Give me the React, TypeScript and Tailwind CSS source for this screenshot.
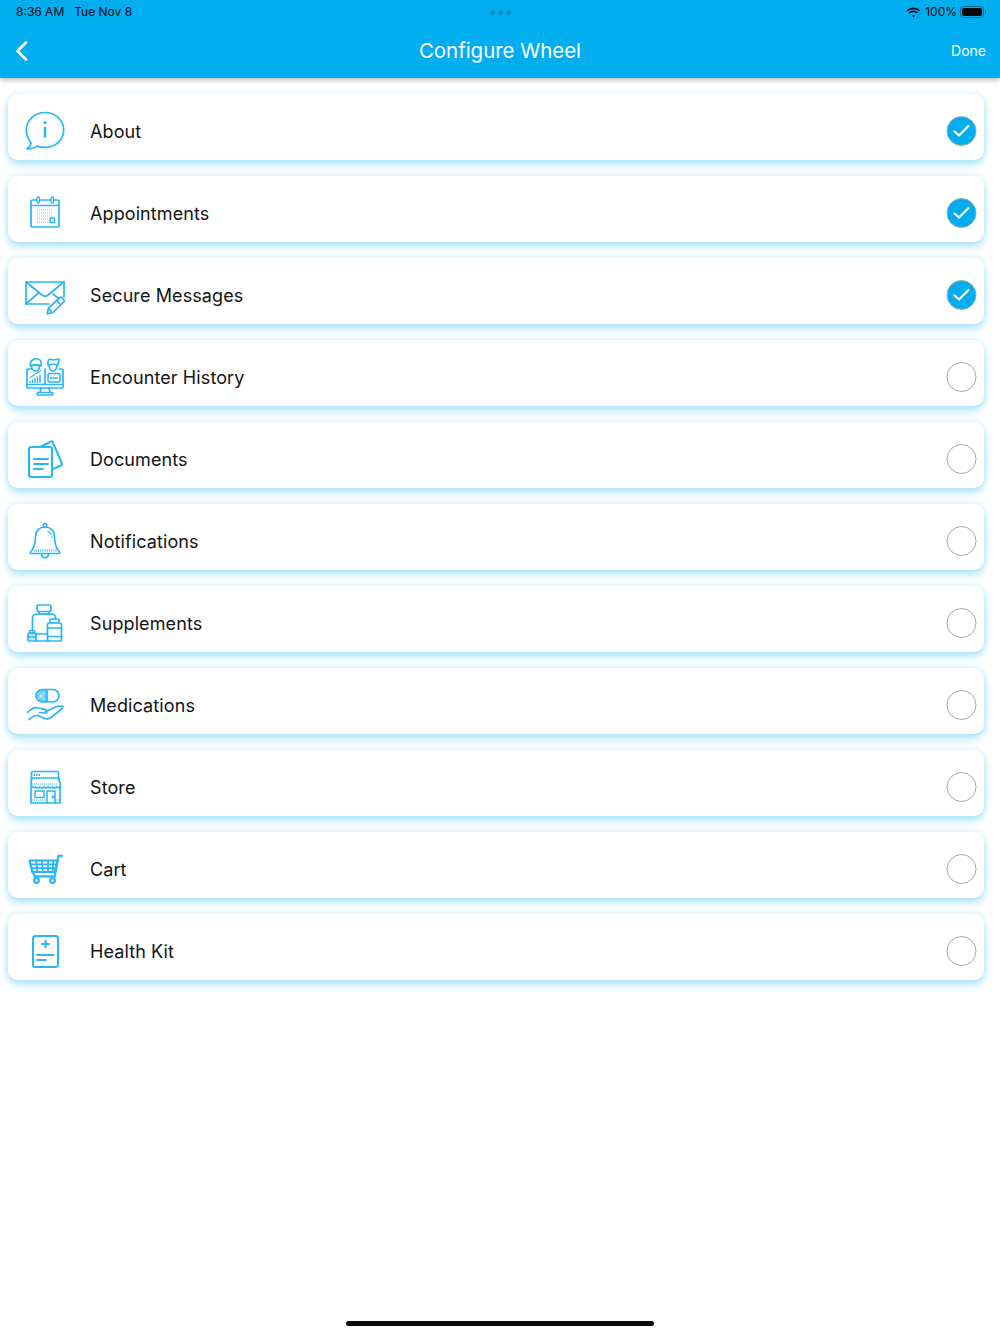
import type { ReactNode } from "react";

const Ico = ({ children }: { children: ReactNode }) => (
  <svg width="44" height="44" viewBox="0 0 44 44" fill="none" stroke="#29b6f6" strokeWidth="1.700" strokeLinecap="round" strokeLinejoin="round" className="shrink-0">
    {children}
  </svg>
);

const AboutIcon = () => (
  <Ico>
    <path d="M22 3.500c10.200 0 18.700 7.500 18.700 17.600S32.200 38.400 22 38.400c-2.800 0-5.300-.4-7.600-1.300-2.800 1.800-6.200 3.200-10.400 2.700 2.200-1.400 3.600-3.300 4-5.700C5.400 30.700 3.300 26.300 3.300 21.100 3.300 11 11.800 3.500 22 3.500Z" />
    <circle cx="22" cy="13.500" r="1.500" fill="#29b6f6" stroke="none" />
    <path d="M22 18v10.500" strokeWidth="2.600" strokeLinecap="butt" />
  </Ico>
);

const CalendarIcon = () => (
  <Ico>
    <rect x="8" y="9" width="28" height="27" rx="2" />
    <path d="M8 14.500h28" />
    <rect x="14" y="6" width="2.400" height="6" rx="1.200" fill="#fff" strokeWidth="1.300" />
    <rect x="28" y="6" width="2.400" height="6" rx="1.200" fill="#fff" strokeWidth="1.300" />
    <path d="M14 19h16M14 22h16M14 25h16M14 28h12M14 31h12" strokeWidth="1.200" strokeDasharray="1 1" strokeLinecap="butt" opacity=".7" />
    <rect x="27" y="27" width="4.500" height="4.500" strokeWidth="1.400" />
  </Ico>
);

const EnvelopeIcon = () => (
  <Ico>
    <path d="M26 31H3V9h38v15" />
    <path d="M3 9l16 13c2 1.500 4 1.500 6 0L41 9" />
    <path d="M3 31l13-11.500M30 21l5 4" />
    <path d="M38.500 24.500l2.500 2.500c.5.5.5 1.200 0 1.700L30 39.500l-5.800 1.300 1.300-5.800 11.500-10.500c.7-.6 1.500-.5 2 0Z" fill="#fff" />
    <path d="M34 28l3.500 3.500M26 36l2.500 2.500" />
  </Ico>
);

const EncounterIcon = () => (
  <Ico>
    <path d="M8 14H5a1 1 0 0 0-1 1v17a1 1 0 0 0 1 1h34a1 1 0 0 0 1-1V15a1 1 0 0 0-1-1h-3" />
    <path d="M4 29.500h36M22 14v15.500M18 33l-1 4.500h10l-1-4.500M14.500 40h15v-2.500h-15Z" />
    <path d="M7.500 11c-.5-2.500.5-5 2-6 2.500-1.700 6-1.700 7.500 0 1.300 1.500 1.500 4 1 6-2-1.500-8-1.500-10.500 0Z" strokeWidth="1.700" />
    <path d="M8.500 11c.3 3.500 2 5 4 5s3.800-1.500 4-5" />
    <path d="M25 10c-.5-2.500 0-4.500 1.500-6l3.500 1 6-1c0 2.500-.5 4.500-1.500 6-3-1-6-1-9.500 0Z" strokeWidth="1.700" />
    <path d="M26 10c.3 3.500 2 6 4 6s3.800-2.500 4-6" />
    <path d="M7 28v-2M9.500 28v-3.500M12 28v-5M14.500 28v-6.500M17 28v-8" strokeWidth="1.400" strokeLinecap="butt" />
    <path d="M7 22.500l11-7" strokeWidth="1.100" />
    <rect x="25" y="18.500" width="12" height="8.500" rx="1.200" strokeWidth="1.500" />
    <path d="M27.500 23h7" strokeWidth="1.700" />
  </Ico>
);

const DocumentsIcon = () => (
  <Ico>
    <path d="M17 10l11-5.500c.7-.3 1.400 0 1.700.6L39 26.500c.3.700 0 1.400-.6 1.700L29 32.500" strokeWidth="2.100" />
    <rect x="6" y="10" width="23" height="30" rx="2.500" fill="#fff" strokeWidth="2.100" />
    <path d="M11 22h14M11 27h14M11 32h9" strokeWidth="1.800" />
  </Ico>
);

const BellIcon = () => (
  <Ico>
    <path d="M22 8c-5.500 0-9.500 3.800-9.500 9.500 0 7-1.300 11.500-5 15.500-.5.700 0 1.500.8 1.500h27.400c.8 0 1.300-.8.800-1.500-3.700-4-5-8.500-5-15.500C31.500 11.800 27.500 8 22 8Z" />
    <circle cx="22" cy="6.500" r="1.800" fill="#fff" />
    <path d="M25 12.500c1.500.7 2.300 1.500 2.900 2.800M29 18v.5" strokeWidth="1.300" />
    <path d="M10.500 31.500h23" strokeWidth="2" strokeDasharray="1 1.200" strokeLinecap="butt" />
    <path d="M18.500 34.500c0 2.600 1.600 4.200 3.500 4.200s3.500-1.600 3.500-4.200" />
  </Ico>
);

const SupplementsIcon = () => (
  <Ico>
    <rect x="14" y="4" width="14" height="6.500" rx="1.500" />
    <path d="M16 10.500V13h10v-2.500" />
    <path d="M9.500 30V17c0-2.200 1.800-4 4-4h15c2.200 0 4 1.800 4 4v1" />
    <path d="M13 33h11.500M13 40h11.500" />
    <rect x="27" y="18" width="9" height="4" rx="1" />
    <rect x="24.500" y="22" width="14" height="18" rx="2" fill="#fff" />
    <path d="M24.500 27h14M24.500 35.500h14" />
    <rect x="6.500" y="29.500" width="5" height="2.500" rx=".6" strokeWidth="1.400" />
    <rect x="5" y="32" width="8" height="8" rx="1" fill="#29b6f6" fillOpacity=".3" />
    <path d="M5 36h8" strokeWidth="1.400" />
  </Ico>
);

const MedicationIcon = () => (
  <Ico>
    <path d="M19.500 6.500H24V19h-4.500a6.250 6.250 0 0 1 0-12.500Z" fill="#29b6f6" stroke="none" fillOpacity=".7" />
    <path d="M15 10l6 6M21 10l-6 6" stroke="#fff" strokeWidth="1.400" strokeDasharray="1.200 1.200" strokeLinecap="butt" />
    <rect x="13" y="6.500" width="23" height="12.500" rx="6.250" />
    <path d="M24 6.500V19" />
    <path d="M4.500 29.500c3.500-3.500 7-6 11-4.500l7 1.700c2.300.6 2 3.500-.3 3.300l-5.700-.5" />
    <path d="M22.500 28.500l11-4.800c3.300-1.600 6 .2 6.500-.5-.5 3-2.700 4.200-5 5.800l-7 5.500c-2.500 1.700-5 1.700-7.500.5l-5-2.200c-3-1.200-5.500.2-9.500 3.700" />
  </Ico>
);

const StoreIcon = () => (
  <Ico>
    <path d="M8.500 15V8A1.500 1.500 0 0 1 10 6.500h24A1.500 1.500 0 0 1 35.500 8v7" />
    <path d="M8 22.500V38h29V22.500" />
    <path d="M10.500 10h7" strokeWidth="1.800" strokeDasharray="1.500 1" strokeLinecap="butt" />
    <path d="M8.500 13h27l2 7c0 2.500-2.700 3-4 2-1 1.200-3 1.200-4 0-1 1.200-3.500 1.200-4.500 0-1 1.200-3 1.200-4 0-1 1.200-3.500 1.200-4.500 0-1 1.200-3 1.200-4 0-1.300 1-4.500.5-4.500-2Z" />
    <path d="M9 19h26" strokeWidth="1.100" strokeDasharray="1 1" strokeLinecap="butt" />
    <rect x="12" y="26" width="9" height="6.500" strokeWidth="1.500" />
    <path d="M24 38V26h8v12" strokeWidth="1.500" />
    <path d="M9 35h13M33 35h3" strokeWidth="1.100" strokeDasharray="1 1" strokeLinecap="butt" />
    <circle cx="30" cy="32" r=".7" fill="#29b6f6" />
  </Ico>
);

const CartIcon = () => (
  <Ico>
    <path d="M39 8.800h-3.500l-3.800 20.500H12" strokeWidth="2.200" />
    <path d="M6.500 13.500h27.800L32 25H9.500Z" strokeWidth="2.200" />
    <path d="M7.500 17.300h26M8.500 21.200H33M13 13.500l1.500 11.500M19 13.500l.7 11.500M25 13.500V25M30.500 13.500l-1 11.500" strokeWidth="1.800" />
    <path d="M9.500 25l2.500 4.300" strokeWidth="2.200" />
    <circle cx="13.500" cy="33.500" r="2.300" strokeWidth="2.200" />
    <circle cx="29.500" cy="33.500" r="2.300" strokeWidth="2.200" />
  </Ico>
);

const HealthIcon = () => (
  <Ico>
    <rect x="10" y="7" width="25" height="31" rx="2.500" strokeWidth="2" />
    <path d="M22.500 11.500v7M19 15h7" strokeWidth="2" />
    <path d="M14 26h16.500M14 31h9" strokeWidth="2" />
  </Ico>
);

const items: { label: string; icon: ReactNode; on?: boolean }[] = [
  { label: "About", icon: <AboutIcon />, on: true },
  { label: "Appointments", icon: <CalendarIcon />, on: true },
  { label: "Secure Messages", icon: <EnvelopeIcon />, on: true },
  { label: "Encounter History", icon: <EncounterIcon /> },
  { label: "Documents", icon: <DocumentsIcon /> },
  { label: "Notifications", icon: <BellIcon /> },
  { label: "Supplements", icon: <SupplementsIcon /> },
  { label: "Medications", icon: <MedicationIcon /> },
  { label: "Store", icon: <StoreIcon /> },
  { label: "Cart", icon: <CartIcon /> },
  { label: "Health Kit", icon: <HealthIcon /> },
];

const Row = ({ label, icon, on }: { label: string; icon: ReactNode; on?: boolean }) => (
  <div className="flex h-[66px] items-center rounded-[10px] bg-white pl-[15px] pr-[8px] pt-[8px] shadow-[0_5px_9px_rgba(0,174,239,0.28),0_0_6px_rgba(0,174,239,0.2)]">
    {icon}
    <span className="ml-[23px] flex-1 pt-[2px] text-[18px] leading-[26px] tracking-[0.1px] text-[#141414] [font-family:Inter,sans-serif]">{label}</span>
    {on ? (
      <span className="flex h-[30px] w-[30px] translate-x-[0.5px] items-center justify-center rounded-full border border-[#a8a8a8] bg-[#00aeef]">
        <svg width="20" height="16" viewBox="0 0 20 16" fill="none" stroke="#fff" strokeWidth="2.200" strokeLinecap="round" strokeLinejoin="round">
          <path d="M3 8.500l4.500 4L17 3" />
        </svg>
      </span>
    ) : (
      <span className="h-[30px] w-[30px] translate-x-[0.5px] rounded-full border border-[#a8a8a8] bg-white" />
    )}
  </div>
);

export default function App() {
  return (
    <div className="flex h-[1334px] w-[1000px] flex-col overflow-hidden bg-white">
      <header className="h-[78px] shrink-0 bg-[#00aeef] shadow-[0_2px_5px_rgba(0,0,0,0.28)]">
        <div className="flex h-[24px] items-center justify-between pl-[16px] pr-[14px] text-[12px] text-[#0a0a0a] [font-family:Inter,sans-serif]">
          <div className="flex w-[198px] gap-[10px]">
            <span>8:36 AM</span>
            <span>Tue Nov 8</span>
          </div>
          <div className="flex gap-[3px]">
            <span className="h-[5px] w-[5px] rounded-full bg-[#0a8cc4]" />
            <span className="h-[5px] w-[5px] rounded-full bg-[#0a8cc4]" />
            <span className="h-[5px] w-[5px] rounded-full bg-[#0a8cc4]" />
          </div>
          <div className="flex w-[200px] items-center justify-end gap-[4px]">
            <svg width="15" height="11" viewBox="0 0 15 11" fill="#0a0a0a">
              <path d="M7.500 2.200c2.200 0 4.200.9 5.700 2.300l1.100-1.200A9.900 9.900 0 0 0 7.500.6 9.900 9.900 0 0 0 .7 3.300l1.100 1.200a8.300 8.300 0 0 1 5.700-2.300Z" />
              <path d="M7.500 5.200c1.400 0 2.600.5 3.600 1.400l1.100-1.200a6.900 6.900 0 0 0-9.400 0l1.100 1.200c1-.9 2.200-1.400 3.600-1.400Z" />
              <path d="M7.500 8c-.7 0-1.200.2-1.700.6l1.700 1.900 1.700-1.900C8.700 8.200 8.200 8 7.500 8Z" />
            </svg>
            <span>100%</span>
            <div className="-ml-[1px] flex items-center">
              <div className="h-[12px] w-[24px] rounded-[3px] border border-[#0a6f9c] p-[1px]">
                <div className="h-full w-full rounded-[2px] bg-[#0a0a0a]" />
              </div>
              <div className="ml-[1px] h-[4px] w-[1px] bg-[#0a6f9c]" />
            </div>
          </div>
        </div>
        <div className="flex h-[54px] items-center justify-between pl-[14px] pr-[14px] text-white [font-family:Inter,sans-serif]">
          <div className="w-[100px]">
            <svg width="16" height="22" viewBox="0 0 16 22" fill="none" stroke="#fff" strokeWidth="2.600" strokeLinecap="round" strokeLinejoin="round" className="block">
              <path d="M12 2.500L3.500 11l8.500 8.500" />
            </svg>
          </div>
          <span className="text-[20.4px] leading-[28px]">Configure Wheel</span>
          <span className="w-[100px] -translate-y-[1px] text-right text-[14px]">Done</span>
        </div>
      </header>
      <main className="flex flex-1 flex-col gap-[16px] pl-[8px] pr-[16px] pt-[16px]">
        {items.map((it) => (
          <Row key={it.label} {...it} />
        ))}
      </main>
      <div className="flex h-[15px] shrink-0 justify-center pt-[2px]">
        <div className="h-[5px] w-[308px] rounded-full bg-[#0a0a0a]" />
      </div>
    </div>
  );
}
